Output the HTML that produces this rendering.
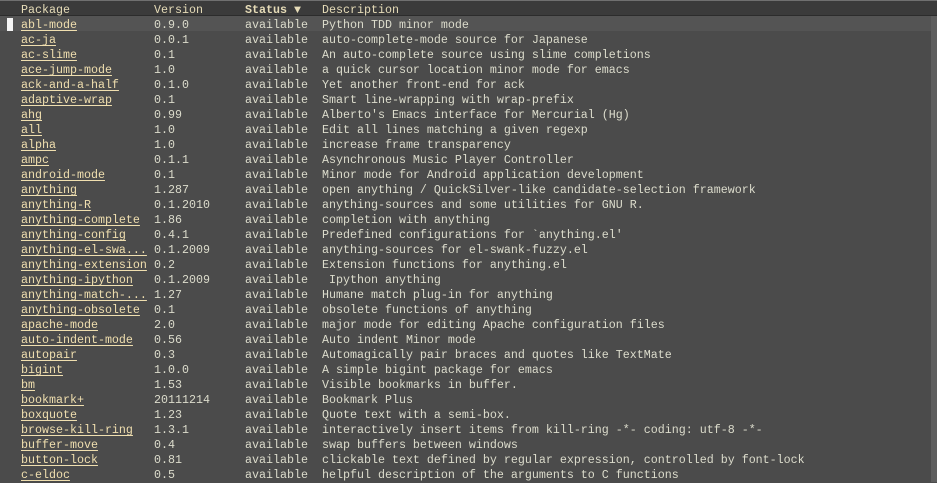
<!DOCTYPE html><html><head><style>
body{margin:0;width:937px;height:482px;overflow:hidden;background:#4b4b4b;font-family:"Liberation Mono",monospace;font-size:11.67px;color:#dcdccc;position:relative}
.hdr{position:absolute;left:0;top:0;width:937px;height:16px;background:#3b3b3b;border-top:1px solid #707070;box-sizing:border-box;border-bottom:1px solid #2c2c2c}
.hl{position:absolute;left:0;top:16px;width:931px;height:15px;background:#545454}
.sb{position:absolute;left:931px;top:16px;width:6px;height:466px;background:#5e5e5e}
.cur{position:absolute;left:7px;top:18px;width:6px;height:13px;background:#f4f4f4}
.r{position:absolute;left:0;height:15px;line-height:15px;white-space:pre}
.r span{position:absolute;top:2px}
.a{left:21px}.b{left:154px}.c{left:245px}.d{left:322px}
.p{color:#f0dfaf;text-decoration:underline;text-underline-offset:2px}
.h{color:#e6dcb8}
</style></head><body>
<div class="hdr"></div><div class="hl"></div><div class="sb"></div><div class="cur"></div>
<div class="r h" style="top:1px"><span class="a">Package</span><span class="b">Version</span><span class="c" style="font-weight:bold">Status ▼</span><span class="d">Description</span></div>
<div id="rows"></div>
<script>
var d=[["abl-mode","0.9.0","Python TDD minor mode"],["ac-ja","0.0.1","auto-complete-mode source for Japanese"],["ac-slime","0.1","An auto-complete source using slime completions"],["ace-jump-mode","1.0","a quick cursor location minor mode for emacs"],["ack-and-a-half","0.1.0","Yet another front-end for ack"],["adaptive-wrap","0.1","Smart line-wrapping with wrap-prefix"],["ahg","0.99","Alberto's Emacs interface for Mercurial (Hg)"],["all","1.0","Edit all lines matching a given regexp"],["alpha","1.0","increase frame transparency"],["ampc","0.1.1","Asynchronous Music Player Controller"],["android-mode","0.1","Minor mode for Android application development"],["anything","1.287","open anything / QuickSilver-like candidate-selection framework"],["anything-R","0.1.2010","anything-sources and some utilities for GNU R."],["anything-complete","1.86","completion with anything"],["anything-config","0.4.1","Predefined configurations for `anything.el'"],["anything-el-swa...","0.1.2009","anything-sources for el-swank-fuzzy.el"],["anything-extension","0.2","Extension functions for anything.el"],["anything-ipython","0.1.2009"," Ipython anything"],["anything-match-...","1.27","Humane match plug-in for anything"],["anything-obsolete","0.1","obsolete functions of anything"],["apache-mode","2.0","major mode for editing Apache configuration files"],["auto-indent-mode","0.56","Auto indent Minor mode"],["autopair","0.3","Automagically pair braces and quotes like TextMate"],["bigint","1.0.0","A simple bigint package for emacs"],["bm","1.53","Visible bookmarks in buffer."],["bookmark+","20111214","Bookmark Plus"],["boxquote","1.23","Quote text with a semi-box."],["browse-kill-ring","1.3.1","interactively insert items from kill-ring -*- coding: utf-8 -*-"],["buffer-move","0.4","swap buffers between windows"],["button-lock","0.81","clickable text defined by regular expression, controlled by font-lock"],["c-eldoc","0.5","helpful description of the arguments to C functions"]];
var h="";d.forEach(function(x,i){h+='<div class="r" style="top:'+(16+i*15)+'px"><span class="a p">'+x[0]+'</span><span class="b">'+x[1]+'</span><span class="c">available</span><span class="d">'+x[2]+'</span></div>'});
document.getElementById("rows").innerHTML=h;
</script>
</body></html>
